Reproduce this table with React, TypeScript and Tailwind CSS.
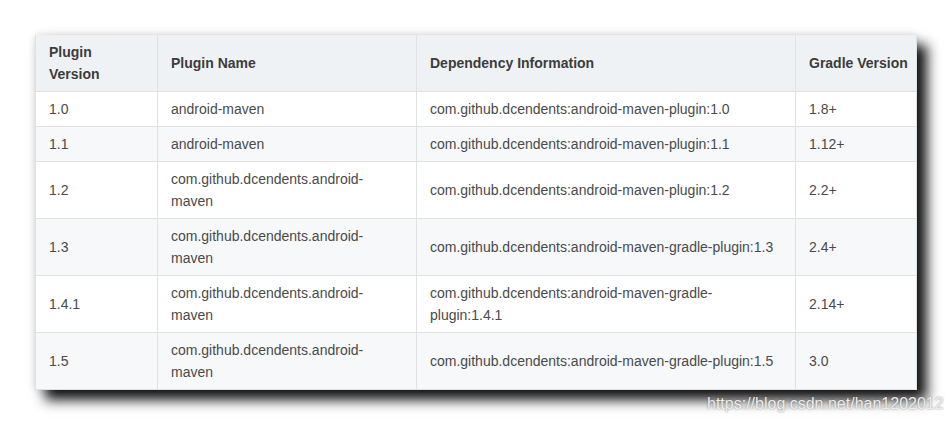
const header = ["Plugin Version", "Plugin Name", "Dependency Information", "Gradle Version"];

const rows = [
  ["1.0", "android-maven", "com.github.dcendents:android-maven-plugin:1.0", "1.8+"],
  ["1.1", "android-maven", "com.github.dcendents:android-maven-plugin:1.1", "1.12+"],
  ["1.2", "com.github.dcendents.android-maven", "com.github.dcendents:android-maven-plugin:1.2", "2.2+"],
  ["1.3", "com.github.dcendents.android-maven", "com.github.dcendents:android-maven-gradle-plugin:1.3", "2.4+"],
  ["1.4.1", "com.github.dcendents.android-maven", "com.github.dcendents:android-maven-gradle-plugin:1.4.1", "2.14+"],
  ["1.5", "com.github.dcendents.android-maven", "com.github.dcendents:android-maven-gradle-plugin:1.5", "3.0"],
];

const widths = ["w-[122px]", "w-[259px]", "w-[379px]", "w-[121px]"];

const App = () => {
  return (
    <div className="relative w-[951px] h-[422px] bg-white pl-[35px] pt-[35px] font-['Liberation_Sans',Arial,sans-serif] text-[14px] leading-[22px]">
      <table className="table-fixed border-collapse w-[881px] bg-white shadow-[10px_10px_12px_rgba(0,0,0,0.92),0_0_8px_rgba(0,0,0,0.15)]">
        <thead>
          <tr className="bg-[#eff2f5]">
            {header.map((h, i) => (
              <th
                key={h}
                className={`${widths[i]} border-x border-b border-[#dfe2e5] pl-[13px] pr-[6px] py-[6px] text-left font-bold text-[#3c3c3c] whitespace-nowrap`}
              >
                {i === 0 ? (
                  <>
                    Plugin
                    <br />
                    Version
                  </>
                ) : (
                  h
                )}
              </th>
            ))}
          </tr>
        </thead>
        <tbody>
          {rows.map((r, ri) => (
            <tr key={r[0]} className={ri % 2 === 1 ? "bg-[#f6f8fa]" : "bg-white"}>
              {r.map((c, ci) => (
                <td
                  key={ci}
                  className="border border-[#dfe2e5] px-[13px] py-[6px] align-middle text-[#4a4a4a] break-words"
                >
                  {c}
                </td>
              ))}
            </tr>
          ))}
        </tbody>
      </table>

      {/* watermark over the shadow */}
      <div className="absolute left-[707px] top-[393px] text-[16px] leading-[22px] whitespace-nowrap text-[#ececec] [text-shadow:0_0_2px_rgba(0,0,0,0.45)]">
        https://blog.csdn.net/han1202012
      </div>
    </div>
  );
};

export default App;
